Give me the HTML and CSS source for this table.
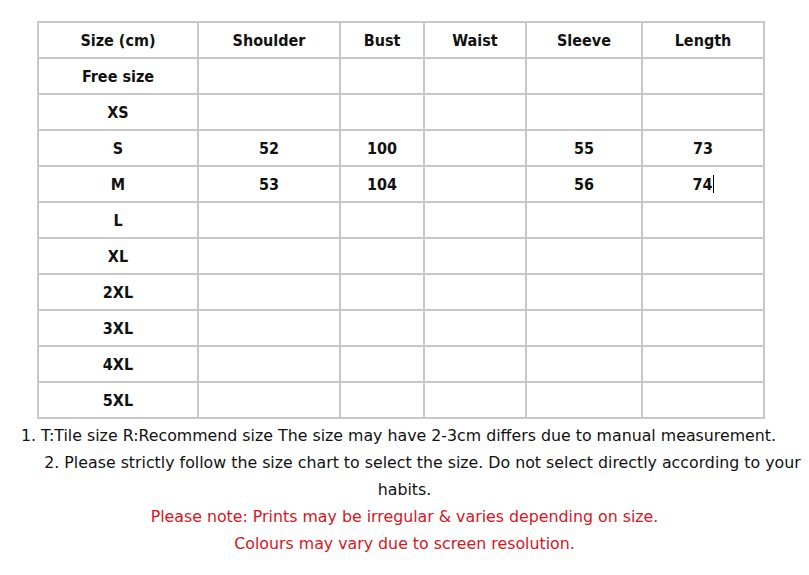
FILE: index.html
```html
<!DOCTYPE html>
<html>
<head>
<meta charset="utf-8">
<link rel="stylesheet" href="styles.css">
</head>
<body>
<div class="page">
  <table class="chart">
    <colgroup>
      <col class="c1"><col class="c2"><col class="c3"><col class="c4"><col class="c5"><col class="c6">
    </colgroup>
    <tr><td>Size (cm)</td><td>Shoulder</td><td>Bust</td><td>Waist</td><td>Sleeve</td><td>Length</td></tr>
    <tr><td>Free size</td><td></td><td></td><td></td><td></td><td></td></tr>
    <tr><td>XS</td><td></td><td></td><td></td><td></td><td></td></tr>
    <tr><td>S</td><td>52</td><td>100</td><td></td><td>55</td><td>73</td></tr>
    <tr><td>M</td><td>53</td><td>104</td><td></td><td>56</td><td>74<span class="caret"></span></td></tr>
    <tr><td>L</td><td></td><td></td><td></td><td></td><td></td></tr>
    <tr><td>XL</td><td></td><td></td><td></td><td></td><td></td></tr>
    <tr><td>2XL</td><td></td><td></td><td></td><td></td><td></td></tr>
    <tr><td>3XL</td><td></td><td></td><td></td><td></td><td></td></tr>
    <tr><td>4XL</td><td></td><td></td><td></td><td></td><td></td></tr>
    <tr><td>5XL</td><td></td><td></td><td></td><td></td><td></td></tr>
  </table>
  <div class="notes">
    <p class="n1">1. T:Tile size R:Recommend size The size may have 2-3cm differs due to manual measurement.</p>
    <p class="n2">2. Please strictly follow the size chart to select the size. Do not select directly according to your habits.</p>
    <p class="red">Please note: Prints may be irregular &amp; varies depending on size.</p>
    <p class="red">Colours may vary due to screen resolution.</p>
  </div>
</div>
</body>
</html>
```
FILE: styles.css
```css
html, body {
  margin: 0;
  padding: 0;
  background: #ffffff;
}
.page {
  width: 809px;
  padding-top: 21px;
  font-family: "DejaVu Sans", Verdana, sans-serif;
  color: #111;
}
.chart {
  margin-left: 37px;
  border-collapse: collapse;
  table-layout: fixed;
  width: 728px;
  border: 1px solid #c4c4c4;
}
.c1 { width: 160px; }
.c2 { width: 142px; }
.c3 { width: 84px; }
.c4 { width: 102px; }
.c5 { width: 116px; }
.c6 { width: 122px; }
.chart td {
  border: 2px solid #c8c8c8;
  height: 34px;
  padding: 0;
  text-align: center;
  vertical-align: middle;
  font-weight: bold;
  font-size: 16px;
  font-family: "DejaVu Sans Condensed", "DejaVu Sans", sans-serif;
  color: #111;
}
.caret {
  display: inline-block;
  width: 1px;
  height: 18px;
  background: #000;
  vertical-align: -3px;
}
.notes {
  font-size: 15.8px;
  font-family: "DejaVu Sans", Verdana, sans-serif;
  line-height: 27px;
  text-align: center;
  margin-top: 3px;
  color: #111;
}
.notes p {
  margin: 0;
}
.n1 {
  padding-right: 12px;
  white-space: nowrap;
}
.n2 {
  text-indent: 36px;
  padding: 0 6px;
}
.red {
  color: #d8141c;
}
```
